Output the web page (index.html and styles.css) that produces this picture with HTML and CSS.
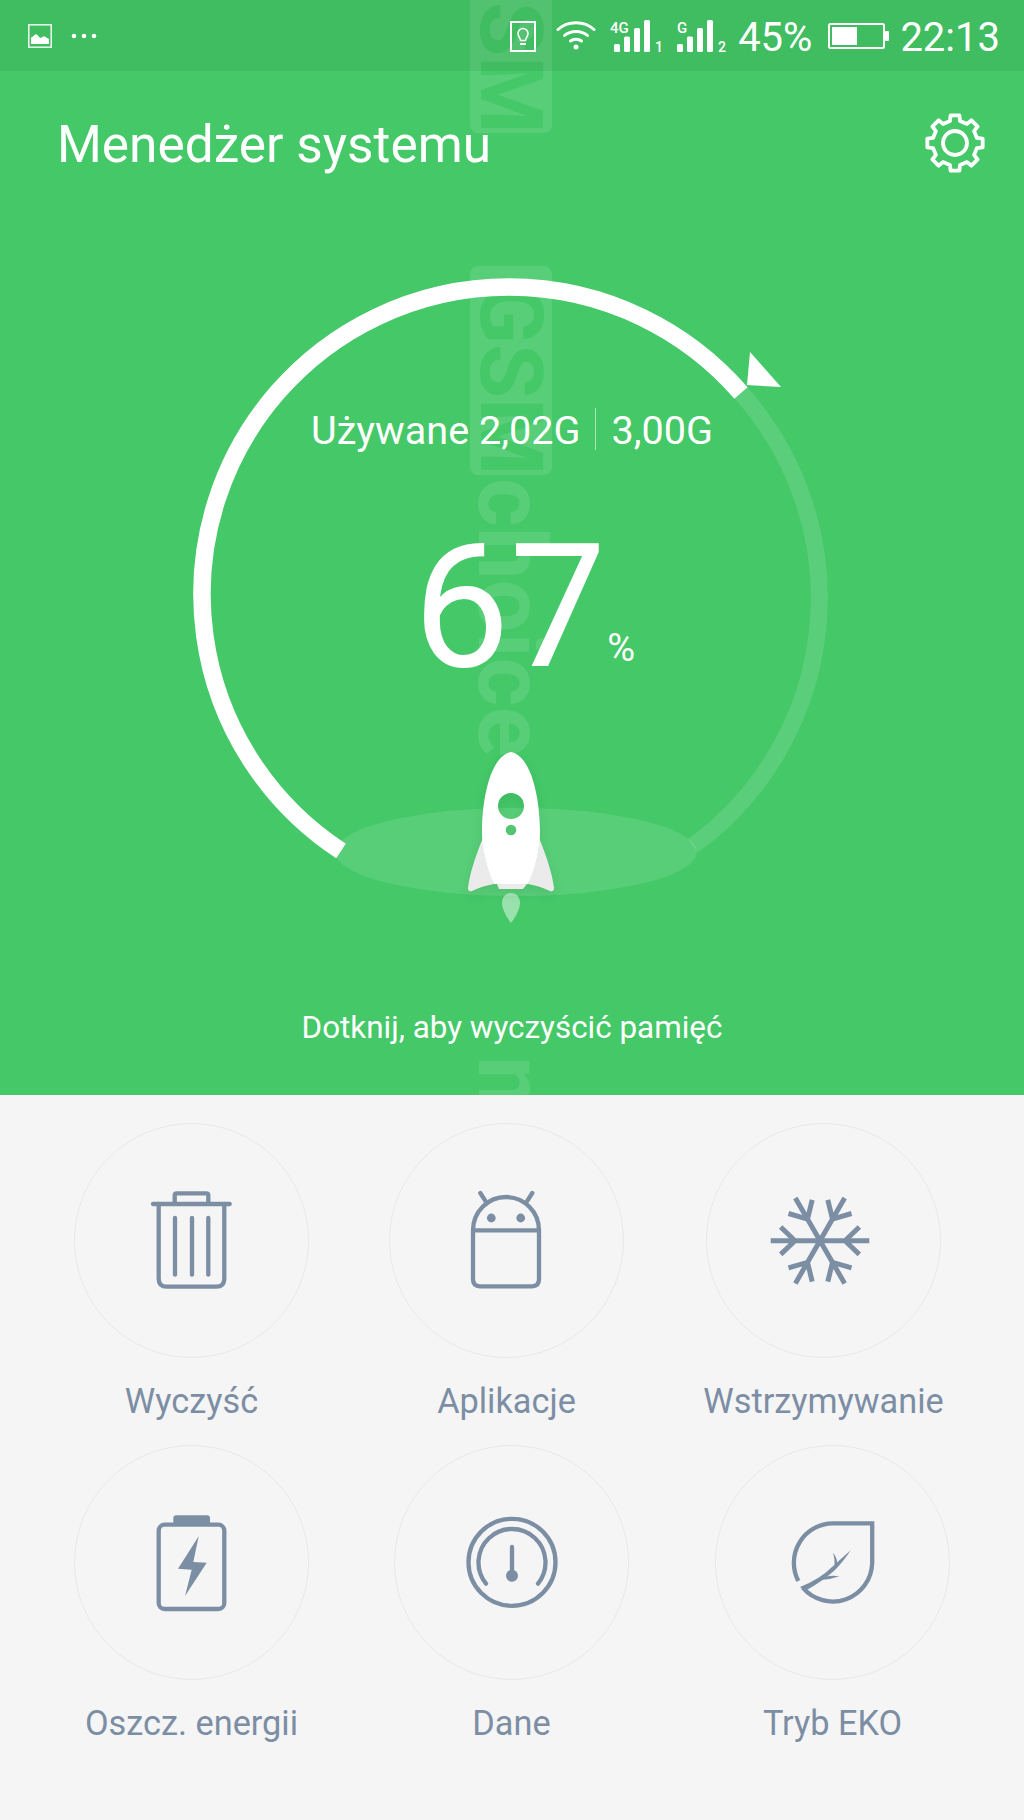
FILE: index.html
```html
<!DOCTYPE html>
<html lang="pl">
<head>
<meta charset="utf-8">
<title>Menedżer systemu</title>
<link rel="stylesheet" href="styles.css">
</head>
<body>
<section class="hero">
  <div class="watermark" aria-hidden="true">
    <div class="wm-box wm-box-top">SM</div>
    <div class="wm-box wm-box-main">GSM</div>
    <div class="wm-text wm-choice">choice</div>
    <div class="wm-text wm-tail">m</div>
  </div>

  <header class="status">
    <div class="status-left">
      <svg class="st-picture" width="24" height="24" viewBox="0 0 24 24"><rect x=".8" y=".8" width="22.4" height="22.4" fill="none" stroke="#fff" stroke-width="1.6" opacity=".85"/><path d="M3 20V13.500L5 12.500 7 10.500 9 10.500 11 13 13 14 15 12.500 17 12.500 19 14 21 15V20Z" fill="#fff"/></svg>
      <svg class="st-dots" width="26" height="6" viewBox="0 0 26 6"><circle cx="3" cy="3" r="2.300" fill="#fff"/><circle cx="13" cy="3" r="2.300" fill="#fff"/><circle cx="23" cy="3" r="2.300" fill="#fff"/></svg>
    </div>
    <div class="status-right">
      <svg class="st-bulb" width="26" height="31" viewBox="0 0 26 31"><rect x="1" y="1" width="24" height="29" fill="none" stroke="#fff" stroke-width="2"/><path d="M10.500 19.500C10.500 17 8 15.500 8 12.500A5 5 0 0 1 18 12.500C18 15.500 15.500 17 15.500 19.500Z" fill="none" stroke="#fff" stroke-width="1.500"/><path d="M10 23H16" stroke="#fff" stroke-width="2"/></svg>
      <svg class="st-wifi" width="40" height="30" viewBox="0 0 40 30" fill="none" stroke="#fff" stroke-width="3" stroke-linecap="round"><path d="M2 9.500C12 .5 28 .5 38 9.500"/><path d="M8.500 15.500C14.500 10 25.500 10 31.500 15.500"/><path d="M14.500 21C17.500 18.500 22.500 18.500 25.500 21"/><circle cx="20" cy="27" r="2.500" fill="#fff" stroke="none"/></svg>
      <svg class="st-signal st-signal-a" width="52" height="32" viewBox="0 0 52 32"><text class="sig-net" x="0" y="13">4G</text><rect x="4" y="24" width="6" height="8" rx="1.500" fill="#fff"/><rect x="14" y="16.500" width="6" height="15.500" rx="1.500" fill="#fff"/><rect x="24" y="8" width="6" height="24" rx="1.500" fill="#fff"/><rect x="34" y="0" width="6" height="32" rx="1.500" fill="#fff"/><text class="sig-sim" x="45" y="32">1</text></svg>
      <svg class="st-signal st-signal-b" width="50" height="32" viewBox="0 0 50 32"><text class="sig-g" x="0" y="13">G</text><rect x="0" y="24" width="6" height="8" rx="1.500" fill="#fff"/><rect x="10" y="16.500" width="6" height="15.500" rx="1.500" fill="#fff"/><rect x="20" y="8" width="6" height="24" rx="1.500" fill="#fff"/><rect x="30" y="0" width="6" height="32" rx="1.500" fill="#fff"/><text class="sig-sim" x="41" y="32">2</text></svg>
      <span class="st-text st-percent">45%</span>
      <svg class="st-battery" width="61" height="26" viewBox="0 0 61 26"><rect x="1" y="1" width="55" height="24" rx="1.500" fill="none" stroke="#fff" stroke-width="2"/><rect x="4" y="4" width="25" height="18" fill="#fff"/><rect x="57" y="8" width="4" height="10" rx="1" fill="#fff"/></svg>
      <span class="st-text st-time">22:13</span>
    </div>
  </header>

  <div class="title-bar">
    <h1 class="title">Menedżer systemu</h1>
    <svg class="gear" width="60" height="60" viewBox="-30 -30 60 60"><path d="M-5.060 -21.920L-4.380 -27.660 4.380 -27.660 5.060 -21.920 11.920 -19.080 16.460 -22.650 22.650 -16.460 19.080 -11.920 21.920 -5.060 27.660 -4.380 27.660 4.380 21.920 5.060 19.080 11.920 22.650 16.460 16.460 22.650 11.920 19.080 5.060 21.920 4.380 27.660 -4.380 27.660 -5.060 21.920 -11.920 19.080 -16.460 22.650 -22.650 16.460 -19.080 11.920 -21.920 5.060 -27.660 4.380 -27.660 -4.380 -21.920 -5.060 -19.080 -11.920 -22.650 -16.460 -16.460 -22.650 -11.920 -19.080Z" fill="none" stroke="#fff" stroke-width="3.800" stroke-linejoin="round"/><circle r="12" fill="none" stroke="#fff" stroke-width="3.800"/></svg>
  </div>

  <div class="gauge">
    <svg class="gauge-art" width="1024" height="760" viewBox="0 200 1024 760">
      <ellipse cx="516" cy="852" rx="181" ry="44" fill="#fff" fill-opacity=".11"/>
      <path d="M741 393A307 307 0 0 1 693 846" fill="none" stroke="#fff" stroke-opacity=".12" stroke-width="17"/>
      <path d="M341 851A307 307 0 1 1 741 393" fill="none" stroke="#fff" stroke-width="17.500"/>
      <path d="M750 352L781 387 747 385Z" fill="#fff"/>
      <path d="M511 893C517 893 520 898 520 903C520 910 514 919 511 923C508 919 502 910 502 903C502 898 505 893 511 893Z" fill="#fff" fill-opacity=".46"/>
      <g class="rocket">
        <path d="M483 838C476 855 470 872 468 888Q468 892 472 891Q482 886 494 884C488 870 483 855 483 838Z" fill="#ebebeb"/>
        <path d="M539 838C546 855 552 872 554 888Q554 892 550 891Q540 886 528 884C534 870 539 855 539 838Z" fill="#ebebeb"/>
        <path d="M497 884L499 889H523L527 884Z" fill="#ebebeb"/>
        <path fill-rule="evenodd" d="M511 752C490 756 482 800 482 832C482 850 487 870 494 884H528C535 870 540 850 540 832C540 800 532 756 511 752ZM498 806a13 13 0 1 0 26 0a13 13 0 1 0 -26 0ZM505.700 830a5.300 5.300 0 1 0 10.600 0a5.300 5.300 0 1 0 -10.600 0Z" fill="#fff"/>
      </g>
    </svg>
    <div class="readout">
      <div class="usage">
        <span>Używane 2,02G</span>
        <i class="usage-rule"></i>
        <span>3,00G</span>
      </div>
      <div class="level">
        <span class="level-value">67</span>
        <span class="level-unit">%</span>
      </div>
    </div>
  </div>

  <p class="hint">Dotknij, aby wyczyścić pamięć</p>
</section>

<main class="tools">
  <div class="tool-row tool-row-first">
    <div class="tool">
      <div class="tool-ring">
        <svg class="tool-icon" viewBox="1 1 233 233" fill="none" stroke-linecap="round" stroke-linejoin="round">
          <path d="M79 81H155.700"/>
          <path d="M100.700 79V72.300Q100.700 70.300 102.700 70.300H132.300Q134.300 70.300 134.300 72.300V79"/>
          <path d="M84.700 81V155.700Q84.700 163.700 92.700 163.700H142.300Q150.300 163.700 150.300 155.700V81"/>
          <path d="M101 95V151.700M118 95V151.700M134.300 95V151.700"/>
        </svg>
      </div>
      <span class="tool-label">Wyczyść</span>
    </div>
    <div class="tool tool-apps">
      <div class="tool-ring">
        <svg class="tool-icon" viewBox="1 1 233 233" fill="none" stroke-linecap="round" stroke-linejoin="round">
          <path d="M84 107.300A33 33.300 0 0 1 150 107.300V156.300Q150 163.300 143 163.300H91Q84 163.300 84 156.300ZM84 107.300H150"/>
          <path d="M91.300 70L97.300 79.300M143.300 70L137.300 79.300"/>
          <circle class="icon-fill" cx="102.300" cy="95" r="4.400"/>
          <circle class="icon-fill" cx="131.700" cy="95" r="4.400"/>
        </svg>
      </div>
      <span class="tool-label">Aplikacje</span>
    </div>
    <div class="tool">
      <div class="tool-ring">
        <svg class="tool-icon tool-icon-snow" viewBox="1 1 233 233" fill="none">
          <g transform="translate(114 117.700)">
            <path d="M-49.300 0H49.300M25 0L39.300 -13.700M25 0L39.300 13.700M-25 0L-39.300 -13.700M-25 0L-39.300 13.700"/>
            <path transform="rotate(60)" d="M-49.300 0H49.300M25 0L39.300 -13.700M25 0L39.300 13.700M-25 0L-39.300 -13.700M-25 0L-39.300 13.700"/>
            <path transform="rotate(120)" d="M-49.300 0H49.300M25 0L39.300 -13.700M25 0L39.300 13.700M-25 0L-39.300 -13.700M-25 0L-39.300 13.700"/>
          </g>
        </svg>
      </div>
      <span class="tool-label">Wstrzymywanie</span>
    </div>
  </div>
  <div class="tool-row tool-row-second">
    <div class="tool">
      <div class="tool-ring">
        <svg class="tool-icon" viewBox="1 1 233 233" fill="none" stroke-linejoin="round">
          <rect x="84.700" y="79.700" width="65.600" height="84.300" rx="6"/>
          <path class="icon-fill" d="M99.300 78.700V73.300Q99.300 70.300 102.300 70.300H133Q136 70.300 136 73.300V78.700Z"/>
          <path class="icon-fill" d="M124.700 91.300L104 123.700 117.700 124.700 111 151 132.700 117.700 119.300 117Z"/>
        </svg>
      </div>
      <span class="tool-label">Oszcz. energii</span>
    </div>
    <div class="tool">
      <div class="tool-ring">
        <svg class="tool-icon" viewBox="1 1 233 233" fill="none" stroke-linecap="round">
          <circle cx="118" cy="117.300" r="43.500"/>
          <path d="M92 138.600A33.500 33.500 0 1 1 144 138.600"/>
          <path d="M118 102V130"/>
          <circle class="icon-fill" cx="118" cy="130.700" r="6"/>
        </svg>
      </div>
      <span class="tool-label">Dane</span>
    </div>
    <div class="tool tool-eko">
      <div class="tool-ring">
        <svg class="tool-icon" viewBox="1 1 233 233" fill="none">
          <path d="M83.300 136A39.500 39.500 0 0 1 117.700 78.300H157.200V117.700A39.500 39.500 0 0 1 87.700 142.700"/>
          <path class="icon-fill" d="M85 142Q105 134 117 122Q127 113 135.700 105.300Q128 117 120 125Q108 136 90 146Z"/>
          <path class="icon-fill" d="M117.700 107.700Q122 112 122.300 118L119.500 121Q120 113 117.700 107.700Z"/>
          <path class="icon-fill" d="M124.300 131.300Q116 130 110 132L106 135Q116 134.500 124.300 131.300Z"/>
        </svg>
      </div>
      <span class="tool-label">Tryb EKO</span>
    </div>
  </div>
</main>
</body>
</html>
```

FILE: styles.css
```css
* { box-sizing: border-box; }

html, body {
  margin: 0;
  padding: 0;
}

body {
  width: 1024px;
  height: 1820px;
  background: #f5f5f5;
  font-family: Roboto, "Liberation Sans", sans-serif;
  overflow: hidden;
}

.hero {
  position: relative;
  display: flex;
  flex-direction: column;
  height: 1095px;
  background: #44c868;
  color: #fff;
  overflow: hidden;
}

/* photographic watermark lying across the screen */
.watermark {
  position: absolute;
  inset: 0 auto 0 470px;
  width: 82px;
}

.wm-box,
.wm-text {
  position: absolute;
  left: 0;
  width: 82px;
  writing-mode: vertical-rl;
  font-weight: 700;
  line-height: 82px;
  white-space: nowrap;
}

.wm-box {
  background: rgba(255, 255, 255, .11);
  border-radius: 8px;
  color: #44c868;
  font-size: 88px;
  text-align: end;
}

.wm-box-top { top: -40px; height: 173px; }
.wm-box-main { top: 266px; height: 209px; }

.wm-text {
  color: rgba(255, 255, 255, .11);
  font-size: 94px;
}

.wm-choice { top: 478px; }
.wm-tail { top: 1056px; }

.status {
  position: relative;
  display: flex;
  flex: none;
  justify-content: space-between;
  align-items: center;
  height: 71px;
  padding: 0 24px 0 28px;
  background: rgba(0, 0, 0, .06);
}

.status-left,
.status-right {
  display: flex;
  align-items: center;
}

.status svg { display: block; }

.st-signal { overflow: visible; }

.st-picture { margin-top: 1px; }
.st-dots { margin: 1px 0 0 19px; }
.st-wifi { margin: 0 0 1px 20px; }
.st-bulb { margin-top: 1px; }
.st-signal-a { margin: 1px 0 0 14px; }
.st-signal-b { margin: 1px 0 0 15px; }
.st-percent { margin-left: 11px; }
.st-battery { margin: 0 0 0 16px; }
.st-time { margin-left: 11px; }

.st-text {
  font-size: 40px;
  line-height: 40px;
  padding-top: 4px;
}

.sig-net,
.sig-g,
.sig-sim {
  fill: #fff;
  font-family: Roboto, "Liberation Sans", sans-serif;
  font-weight: 500;
}

.sig-net { font-size: 15px; }
.sig-g { font-size: 15px; }
.sig-sim { font-size: 14px; }

.title-bar {
  position: relative;
  display: flex;
  flex: none;
  justify-content: space-between;
  align-items: center;
  height: 129px;
  padding: 18px 39px 0 57px;
}

.title {
  margin: 0;
  font-size: 51.400px;
  font-weight: 400;
  line-height: 60px;
}

.gear {
  display: block;
  margin-top: -3px;
}

.gauge {
  position: relative;
  display: grid;
  flex: none;
  height: 760px;
}

.gauge-art,
.readout {
  grid-area: 1 / 1;
}

.gauge-art { display: block; }

.rocket { filter: drop-shadow(0 5px 6px rgba(0, 0, 0, .07)); }

.readout {
  display: flex;
  flex-direction: column;
  align-items: center;
  padding-top: 209px;
}

.usage {
  display: flex;
  align-items: center;
  gap: 15px;
  font-size: 39.600px;
  line-height: 44px;
}

.usage-rule {
  width: 1px;
  height: 42px;
  margin-top: -4px;
  background: rgba(255, 255, 255, .55);
}

.level {
  display: flex;
  align-items: baseline;
  padding-left: 24px;
  margin-top: 69px;
}

.level-value {
  font-size: 172px;
  font-weight: 400;
  line-height: 170px;
}

.level-unit {
  margin-left: 1px;
  font-size: 38px;
  font-weight: 400;
  line-height: 36px;
  transform: translateY(-5px);
}

.hint {
  position: relative;
  margin: 0;
  padding-top: 48px;
  font-size: 31.400px;
  line-height: 40px;
  text-align: center;
}

.tools {
  padding: 28px 0 0 74px;
}

.tool-row {
  display: flex;
  height: 322px;
}

.tool-row-first { gap: 82px; }
.tool-row-second { gap: 85px; }
.tool-apps { margin-left: -2px; }
.tool-eko { margin-left: 1px; }

.tool {
  display: flex;
  flex-direction: column;
  align-items: center;
  width: 235px;
}

.tool-ring {
  flex: none;
  width: 235px;
  height: 235px;
  border: 1px solid #e8e8e8;
  border-radius: 50%;
}

.tool-icon {
  display: block;
  width: 233px;
  height: 233px;
  stroke: #7c8ea4;
  stroke-width: 4.300px;
}

.tool-icon-snow { stroke-width: 5px; }

.icon-fill {
  fill: #7c8ea4;
  stroke: none;
}

.tool-label {
  margin-top: 23px;
  color: #7c8ea4;
  font-size: 34.300px;
  line-height: 40px;
  white-space: nowrap;
}
```
